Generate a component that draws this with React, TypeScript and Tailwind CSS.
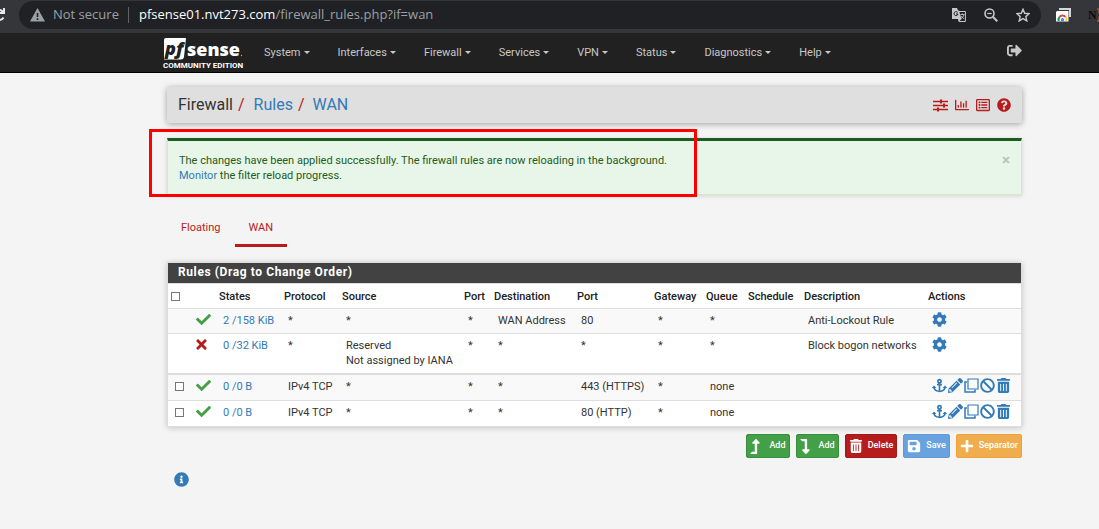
import React from 'react';
import {
  FaAnchor, FaBan, FaCheck, FaCog, FaInfoCircle, FaLevelDownAlt, FaLevelUpAlt, FaPencilAlt,
  FaPlus, FaQuestionCircle, FaRegChartBar, FaRegListAlt, FaSave, FaSignOutAlt, FaTimes,
} from 'react-icons/fa';
import { FaTrashCan } from 'react-icons/fa6';

const menus = ['System', 'Interfaces', 'Firewall', 'Services', 'VPN', 'Status', 'Diagnostics', 'Help'];

const columns = [
  { label: 'States', width: 'w-[65px]' },
  { label: 'Protocol', width: 'w-[58px]' },
  { label: 'Source', width: 'w-[122px]' },
  { label: 'Port', width: 'w-[30px]' },
  { label: 'Destination', width: 'w-[83px]' },
  { label: 'Port', width: 'w-[77px]' },
  { label: 'Gateway', width: 'w-[52px]' },
  { label: 'Queue', width: 'w-[42px]' },
  { label: 'Schedule', width: 'w-[56px]' },
  { label: 'Description', width: '' },
  { label: 'Actions', width: 'w-[97px]' },
];

type Rule = {
  pass: boolean;
  system: boolean;
  states: string;
  cells: string[];
  rowClass: string;
};

const rules: Rule[] = [
  { pass: true, system: true, states: '2 /158 KiB', cells: ['*', '*', '*', 'WAN Address', '80', '*', '*', '', 'Anti-Lockout Rule'], rowClass: 'h-[25px] bg-[#f9f9f9] [&>td]:border-t' },
  { pass: false, system: true, states: '0 /32 KiB', cells: ['*', 'Reserved\nNot assigned by IANA', '*', '*', '*', '*', '*', '', 'Block bogon networks'], rowClass: 'h-[40px] bg-white [&>td]:border-t' },
  { pass: true, system: false, states: '0 /0 B', cells: ['IPv4 TCP', '*', '*', '*', '443 (HTTPS)', '*', 'none', '', ''], rowClass: 'h-[27px] bg-[#f9f9f9] [&>td]:border-t-2' },
  { pass: true, system: false, states: '0 /0 B', cells: ['IPv4 TCP', '*', '*', '*', '80 (HTTP)', '*', 'none', '', ''], rowClass: 'h-[26px] bg-white [&>td]:border-t' },
];

const checkbox = 'block size-[9px] appearance-none border border-[#767676] bg-white checked:bg-[#337ab7]';

function BrowserBar() {
  return (
    <div className="flex h-[33px] items-start overflow-hidden bg-[#35363a] pt-px">
      <svg className="mt-[6px] h-4 w-[5px] shrink-0" viewBox="0 0 5 16" fill="none" stroke="#e8eaed" strokeWidth="2" aria-hidden="true">
        <path d="M0 3c1.300 0 2 .8 3 2M4 1v5H0M0 13c1.500 0 2.500-.7 3.500-2.500" />
      </svg>
      <div className="ml-[14px] flex h-7 flex-1 items-center rounded-full bg-[#202124] pr-[11px] pl-[11px] font-['Open_Sans',sans-serif] text-[13px]">
        <svg className="h-[14px] w-[15px]" viewBox="0 0 15 14" aria-hidden="true">
          <path d="M7.500 0 15 13.500H0Z" fill="#9aa0a6" />
          <path d="M6.700 5h1.600v4H6.700zM6.700 10.300h1.600v1.600H6.700z" fill="#202124" />
        </svg>
        <span className="ml-2 whitespace-nowrap text-[#9aa0a6]">Not secure</span>
        <span className="mr-[10px] ml-[9px] h-4 w-px bg-[#5f6368]" />
        <span className="flex-1 whitespace-nowrap text-[#9aa0a6]"><span className="text-white">pfsense01.nvt273.com</span>/firewall_rules.php?if=wan</span>
        <div className="flex items-center gap-[18px] text-[#c4c7ca]">
          <button aria-label="Translate this page" className="block">
            <svg width="14" height="14" viewBox="0 0 14 14">
              <path d="M5 3.500h8.400v10H7z" fill="none" stroke="#c4c7ca" />
              <path d="M0 0h5l1 2.500h1L9.500 11 7 13.500 6.300 11H0Z" fill="#c4c7ca" />
              <path d="M5.700 4.500A2 2 0 1 0 6 6H4" fill="none" stroke="#202124" />
              <path d="M8.500 6.500h4M10.500 5.500v1M12 6.500c-.4 2-1.600 3.300-3 4M9.200 8l3 3" fill="none" stroke="#c4c7ca" strokeWidth=".9" />
            </svg>
          </button>
          <button aria-label="Zoom" className="block">
            <svg width="14" height="14" viewBox="0 0 14 14" fill="none" stroke="#c4c7ca" strokeWidth="1.600">
              <circle cx="5.500" cy="5.500" r="4.500" /><path d="M8.800 8.800 13.300 13.300" strokeWidth="2" /><path d="M3.300 5.500h4.400" strokeWidth="1.200" />
            </svg>
          </button>
          <button aria-label="Bookmark this page" className="block">
            <svg width="14" height="14" viewBox="0 0 14 14" fill="none" stroke="#c4c7ca" strokeWidth="1.400">
              <path d="m7 1.300 1.700 4 4.400.4-3.300 2.900 1 4.300L7 10.600l-3.800 2.300 1-4.300L.9 5.700l4.400-.4Z" />
            </svg>
          </button>
        </div>
      </div>
      <div className="flex w-[58px] items-center overflow-hidden pt-[7px] pl-[15px]">
        <svg className="shrink-0" width="15" height="14" viewBox="0 0 15 14" aria-hidden="true">
          <path d="M3 0h12v9h-2V2H3z" fill="#d5d7da" />
          <path d="M1 3h11.500v10.500H0V4z" fill="#fff" />
          <path d="M2.800 13a3.800 3.800 0 0 1 .8-4" fill="none" stroke="#0f9d58" strokeWidth="2" />
          <path d="M3.500 9a3.800 3.800 0 0 1 6 0" fill="none" stroke="#db4437" strokeWidth="2" />
          <path d="M9.400 9a3.800 3.800 0 0 1 .8 4" fill="none" stroke="#ffcd40" strokeWidth="2" />
          <circle cx="6.500" cy="11.800" r="1.700" fill="#4285f4" />
        </svg>
        <span className="ml-[17px] font-['Liberation_Serif',serif] text-[12px] leading-[14px] font-bold text-[#0c0c0c]">N</span>
        <svg className="shrink-0" width="3" height="14" viewBox="0 0 3 14" fill="none" stroke="#d2662c" aria-hidden="true"><path d="M0 1h2v4l1 2-1 2v4H0" /></svg>
      </div>
    </div>
  );
}

function Logo() {
  return (
    <a href="#" aria-label="pfSense Community Edition" className="mt-[5px] block w-20 text-white">
      <svg className="overflow-visible" width="80" height="32" viewBox="0 0 80 32" aria-hidden="true">
        <path d="M3 0h20l-2 19q-.5 2.500-3 2.500H1V2q0-2 2-2Z" fill="#fff" />
        <text x="2" y="17" fontFamily="Open Sans, sans-serif" fontSize="18" fontWeight="800" fontStyle="italic" fill="#212121">pf</text>
        <text x="24" y="18" fontFamily="Open Sans, sans-serif" fontSize="18" fontWeight="800" fill="#fff">sense</text>
        <circle cx="78.500" cy="17.500" r=".7" fill="#aaa" />
        <text x="0" y="30" fontFamily="Roboto, sans-serif" fontSize="8" fontWeight="700" fill="#fff">COMMUNITY EDITION</text>
      </svg>
    </a>
  );
}

function NavBar() {
  return (
    <nav className="flex h-10 items-start border-b border-black bg-[#212121] pr-[77px] pl-[163px]">
      <Logo />
      <ul className="ml-[7px] flex">
        {menus.map((m) => (
          <li key={m}>
            <button className="flex items-center gap-[3px] px-[14px] pt-3 leading-[15px] text-[#c8c8c8]">
              {m}
              <svg width="6" height="3" viewBox="0 0 6 3" aria-hidden="true"><path d="M0 0h6L3 3Z" fill="currentColor" /></svg>
            </button>
          </li>
        ))}
      </ul>
      <button aria-label="Logout" className="mt-[10px] ml-auto text-[15px] text-[#c8c8c8]"><FaSignOutAlt /></button>
    </nav>
  );
}

function SlidersIcon() {
  return (
    <svg width="15" height="13" viewBox="0 0 15 13" fill="none" stroke="currentColor" strokeWidth="1.500" aria-hidden="true">
      <path d="M0 2.500h15M0 6.500h15M0 10.500h15" /><path d="M8 .5v4M11 4.500v4M5 8.500v4" strokeWidth="2" />
    </svg>
  );
}

function CopyIcon() {
  return (
    <svg width="15" height="15" viewBox="0 0 15 15" fill="none" stroke="currentColor" aria-hidden="true">
      <path d="M4 1h10v10H4z" strokeWidth="1.200" />
      <path d="M3 4H1v10h10v-2.500" strokeWidth="1.500" />
    </svg>
  );
}

function Breadcrumb() {
  return (
    <header className="flex h-9 items-center rounded-[2px] bg-[#dfdfdf] px-[11px] shadow-[0_1px_6px_rgba(0,0,0,0.35)]">
      <h1 className="flex gap-[5px] text-base text-[#333]">
        <span>Firewall</span>
        <span className="mr-1 text-[#b71c1c]">/</span>
        <a href="#" className="text-[#337ab7]">Rules</a>
        <span className="mr-[3px] text-[#b71c1c]">/</span>
        <a href="#" className="text-[#337ab7]">WAN</a>
      </h1>
      <div className="ml-auto flex items-center gap-[7px] text-[14px] text-[#b71c1c]">
        <a href="#" aria-label="Advanced settings"><SlidersIcon /></a>
        <a href="#" aria-label="Status"><FaRegChartBar /></a>
        <a href="#" aria-label="Logs"><FaRegListAlt /></a>
        <a href="#" aria-label="Help"><FaQuestionCircle /></a>
      </div>
    </header>
  );
}

function Alert() {
  return (
    <div role="alert" className="relative mt-[15px] flex h-[57px] items-start justify-between border border-t-[3px] border-[#d6e9c6] border-t-[#1b5e20] bg-[#e8f5e9] px-[11px] pt-3 leading-[15px] text-[#1b5e20] shadow-[0_1px_4px_rgba(0,0,0,0.15)]">
      <p>
        The changes have been applied successfully. The firewall rules are now reloading in the background.<br />
        <a href="#" className="text-[#337ab7]">Monitor</a> the filter reload progress.
      </p>
      <button aria-label="Close" className="text-[15px] leading-[15px] font-bold text-[#b9c4ba]">×</button>
      <div className="pointer-events-none absolute -top-3 -left-[19px] h-[68px] w-[548px] border-[3px] border-[#fe0000]" />
    </div>
  );
}

function RulesTable() {
  return (
    <section className="mt-[15px] border border-[#ddd] bg-white text-[#333] shadow-[0_1px_6px_rgba(0,0,0,0.2)]">
      <h2 className="h-5 bg-[#424242] px-[10px] text-[12px] leading-[19px] font-bold tracking-wider text-white">Rules (Drag to Change Order)</h2>
      <table className="w-full table-fixed border-separate border-spacing-0 text-left leading-[15px] [&_td]:border-[#ddd] [&_th]:border-[#ddd]">
        <thead>
          <tr className="h-[25px] [&>th]:border-t">
            <th className="w-[20px] pl-[3px]"><input type="checkbox" aria-label="Select all rules" className={checkbox} /></th>
            <th className="w-[27px]" aria-label="Status" />
            {columns.map((c, i) => (
              <th key={i} className={`${c.width} pl-1 font-medium whitespace-nowrap text-[#212121]`}>{c.label}</th>
            ))}
          </tr>
        </thead>
        <tbody>
          {rules.map((r, i) => (
            <tr key={i} className={`${r.rowClass} align-top`}>
              <td className="pt-1 pl-[7px]">
                {!r.system && <input type="checkbox" aria-label={`Select rule ${i + 1}`} className={`${checkbox} mt-[3px]`} />}
              </td>
              <td className="pt-[3px] pl-2 text-[15px]">
                {r.pass ? <FaCheck className="block text-[#43a047]" /> : <FaTimes className="block w-[11px] text-[#b71c1c]" />}
              </td>
              <td className="pt-1 pl-2"><a href="#" className="text-[#337ab7]">{r.states}</a></td>
              {r.cells.map((c, j) => (
                <td key={j} className="pt-1 pl-2 whitespace-pre">{c}</td>
              ))}
              <td className="pt-[3px] pl-2">
                {r.system ? (
                  <a href="#" aria-label="Settings" className="block w-4 text-[15px] text-[#337ab7]"><FaCog /></a>
                ) : (
                  <div className="flex gap-px text-[15px] text-[#337ab7]">
                    <a href="#" aria-label="Add gateway"><FaAnchor /></a>
                    <a href="#" aria-label="Edit"><FaPencilAlt /></a>
                    <a href="#" aria-label="Copy"><CopyIcon /></a>
                    <a href="#" aria-label="Disable"><FaBan /></a>
                    <a href="#" aria-label="Delete"><FaTrashCan /></a>
                  </div>
                )}
              </td>
            </tr>
          ))}
        </tbody>
      </table>
    </section>
  );
}

const button = 'flex h-6 items-center rounded-[2px] border px-[3px] text-[9px] font-medium text-white';

function Actions() {
  return (
    <div className="mt-[7px] flex justify-end gap-[6px]">
      <button className={`${button} gap-[9px] border-[#388e3c] bg-[#43a047]`}><FaLevelUpAlt className="w-[10px] text-[15px]" />Add</button>
      <button className={`${button} gap-[9px] border-[#388e3c] bg-[#43a047]`}><FaLevelDownAlt className="w-[10px] text-[15px]" />Add</button>
      <button className={`${button} gap-[5px] border-[#a01818] bg-[#b71c1c]`}><FaTrashCan className="text-[14px]" />Delete</button>
      <button className={`${button} gap-[5px] border-[#6199d5] bg-[#68a3e0]`}><FaSave className="text-[14px]" />Save</button>
      <button className={`${button} gap-[5px] border-[#eea236] bg-[#f0ad4e]`}><FaPlus className="text-[14px]" />Separator</button>
    </div>
  );
}

export default function App() {
  return (
    <div className="min-h-screen bg-[#f4f4f4] font-['Roboto',sans-serif] text-[11px]">
      <BrowserBar />
      <NavBar />
      <main className="pt-[14px] pr-[77px] pl-[167px]">
        <Breadcrumb />
        <Alert />
        <div role="tablist" className="mt-[22px] flex leading-[15px] text-[#b71c1c]">
          <button role="tab" aria-selected="false" className="border-b-[3px] border-transparent px-[14px] pt-[3px] pb-[9px]">Floating</button>
          <button role="tab" aria-selected="true" className="border-b-[3px] border-[#b71c1c] px-[14px] pt-[3px] pb-[9px]">WAN</button>
        </div>
        <RulesTable />
        <Actions />
        <button aria-label="More information" className="mt-[14px] ml-[7px] block text-[15px] text-[#337ab7]"><FaInfoCircle /></button>
      </main>
    </div>
  );
}
